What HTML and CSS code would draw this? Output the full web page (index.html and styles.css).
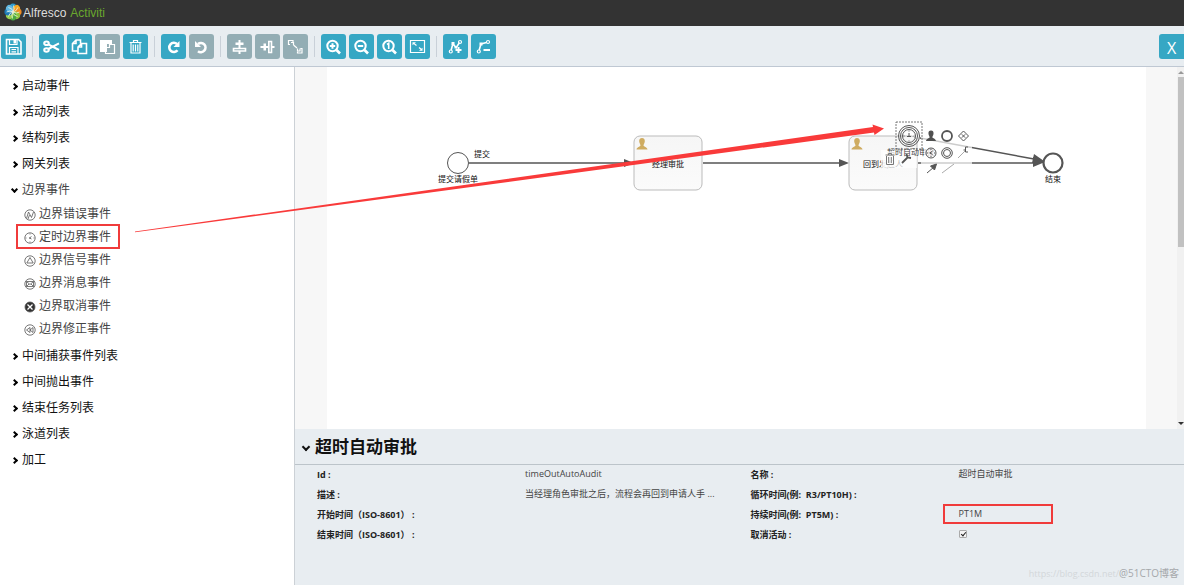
FILE: index.html
```html
<!DOCTYPE html>
<html lang="zh-CN">
<head>
<meta charset="utf-8">
<title>Alfresco Activiti</title>
<link rel="stylesheet" href="styles.css">
</head>
<body>
<header class="brand">
  <svg class="brand-mark" viewBox="0 0 18 18" aria-hidden="true">
    <ellipse cx="9" cy="4.400" rx="3.400" ry="4" fill="#2e9bd0"/>
    <ellipse cx="9" cy="4.400" rx="3.400" ry="4" fill="#f5a623" transform="rotate(45 9 9)"/>
    <ellipse cx="9" cy="4.400" rx="3.400" ry="4" fill="#f18b21" transform="rotate(90 9 9)"/>
    <ellipse cx="9" cy="4.400" rx="3.400" ry="4" fill="#8dc63f" transform="rotate(135 9 9)"/>
    <ellipse cx="9" cy="4.400" rx="3.400" ry="4" fill="#49a942" transform="rotate(180 9 9)"/>
    <ellipse cx="9" cy="4.400" rx="3.400" ry="4" fill="#9ad04f" transform="rotate(225 9 9)"/>
    <ellipse cx="9" cy="4.400" rx="3.400" ry="4" fill="#1c78b5" transform="rotate(270 9 9)"/>
    <ellipse cx="9" cy="4.400" rx="3.400" ry="4" fill="#63b9e3" transform="rotate(315 9 9)"/>
    <path d="M9 9Q11 6 9.500 2.500M9 9Q13 8 13.800 4.500M9 9Q12.500 11 15.500 9M9 9Q9.500 13 13.500 13.500M9 9Q7 12 8.500 15.500M9 9Q5 10 4.500 13.500M9 9Q6 7 2.500 9M9 9Q8.500 5 4.500 4.500" fill="none" stroke="#f3f8e4" stroke-width=".8"/>
  </svg>
  <span class="brand-name">Alfresco</span><span class="brand-product">Activiti</span>
</header>

<nav class="toolbar" aria-label="工具栏">
  <button class="tool" aria-label="保存"><svg viewBox="0 0 25 25"><path class="mid" d="M5.500 5.500h12l2.500 2.500v12H5.500z"/><path d="M8.500 5.500v5h7.500v-5M8.500 20v-6.500h8.500v6.500M10.500 15.500h4.500M10.500 17.800h4.500"/><path class="solid" d="M12.500 6h2.500v3.500h-2.500z"/></svg></button>
  <span class="divider"></span>
  <button class="tool" aria-label="剪切"><svg viewBox="0 0 25 25"><ellipse class="bold" cx="7.500" cy="9.300" rx="2.300" ry="1.800"/><ellipse class="bold" cx="7.500" cy="16" rx="2.300" ry="1.800"/><path class="bold" d="M9.300 10.300l10.700 5.700M9.300 15L20 9.300"/></svg></button>
  <button class="tool" aria-label="复制"><svg viewBox="0 0 25 25"><path class="mid" d="M13.500 9.500V6H9L5.500 9.500V17H11M9 6v3.500H5.500M14.500 9.500h5v10H11V13zM14.500 9.500V13H11"/></svg></button>
  <button class="tool muted" aria-label="粘贴"><svg viewBox="0 0 25 25"><path class="solid" d="M5 6h12v4h-5v8H5z"/><path d="M14.500 10.500h5v9h-9v-6h4z"/></svg></button>
  <button class="tool" aria-label="删除"><svg viewBox="0 0 25 25"><path d="M6.500 8.500h12M10.500 8V6.500h4V8M8 9v10h9V9M10.200 10.500v7M12.500 10.500v7M14.800 10.500v7"/></svg></button>
  <span class="divider"></span>
  <button class="tool" aria-label="重做"><svg viewBox="0 0 25 25"><path class="heavy" d="M16 10a4.600 4.600 0 1 0 .5 6.300"/><path class="solid" d="M18.500 7v6h-6z"/></svg></button>
  <button class="tool muted" aria-label="撤销"><svg viewBox="0 0 25 25"><path class="heavy" d="M9 10a4.600 4.600 0 1 1 0 7.200"/><path class="solid" d="M6 7v6h6z"/></svg></button>
  <span class="divider"></span>
  <button class="tool muted" aria-label="垂直对齐"><svg viewBox="0 0 25 25"><path class="solid" d="M11.500 6h2v14h-2zM8.500 8.500h8v2.500h-8z"/><path class="mid mutedfill" d="M6.500 14.500h12v2.500h-12z"/></svg></button>
  <button class="tool muted" aria-label="水平对齐"><svg viewBox="0 0 25 25"><path class="solid" d="M5.500 12h14v2h-14zM8.500 9.500h2.500v7H8.500z"/><path class="mid mutedfill" d="M13.800 7.500h2.700v11h-2.700z"/></svg></button>
  <button class="tool muted" aria-label="相同大小"><svg viewBox="0 0 25 25"><path d="M7 10.500H5.500V6.500h4.500v2M8 8.500h2.500v2.500M10.500 11l3.500 3M14.500 17.500v1.500h4.500v-4.500H17.500M14.500 17v-2.500M14.500 17h2.500V14.500"/></svg></button>
  <span class="divider"></span>
  <button class="tool" aria-label="放大"><svg viewBox="0 0 25 25"><circle class="bold" cx="11.500" cy="12" r="5.200"/><path class="heavy" d="M15.500 16l3.500 3.500"/><path class="bold" d="M11.500 9.300v5.400M8.800 12h5.400"/></svg></button>
  <button class="tool" aria-label="缩小"><svg viewBox="0 0 25 25"><circle class="bold" cx="11.500" cy="12" r="5.200"/><path class="heavy" d="M15.500 16l3.500 3.500"/><path class="bold" d="M8.800 12h5.400"/></svg></button>
  <button class="tool" aria-label="实际大小"><svg viewBox="0 0 25 25"><circle class="bold" cx="11.500" cy="12" r="5.200"/><path class="heavy" d="M15.500 16l3.500 3.500"/><path class="mid" d="M10 10.500l1.700-1.200V15"/></svg></button>
  <button class="tool" aria-label="适应窗口"><svg viewBox="0 0 25 25"><path d="M5.500 6.500h14v12h-14zM9 9.500l2.500 2M14 13.500l2.500 2"/><path class="solid" d="M7.500 8.300h3.500l-3.500 3zM17.500 16.700h-3.500l3.500-3z"/></svg></button>
  <span class="divider"></span>
  <button class="tool" aria-label="添加拐点"><svg viewBox="0 0 25 25"><circle cx="7.800" cy="17.500" r="1.500"/><path class="mid" d="M8.200 16l1.600-6 3.500 3.500 3.200-5"/><path class="solid" d="M8.500 8h3v3h-3zM11.500 12h2.500v2.500h-2.500z"/><circle cx="17" cy="8" r="1.500"/><path class="bold" d="M15.500 13v6M12.500 16h6"/></svg></button>
  <button class="tool" aria-label="移除拐点"><svg viewBox="0 0 25 25"><circle cx="7.800" cy="17.500" r="1.500"/><path class="mid" d="M8.200 16l1.800-6 5.500-1.500"/><path class="solid" d="M8.500 8.500h3v3h-3z"/><circle cx="17" cy="8" r="1.500"/><path class="bold" d="M12.500 16H19"/></svg></button>
  <button class="tool close" aria-label="关闭">X</button>
</nav>

<div class="workspace">
  <aside class="palette">
    <button class="group">启动事件</button>
    <button class="group">活动列表</button>
    <button class="group">结构列表</button>
    <button class="group">网关列表</button>
    <button class="group open" aria-expanded="true">边界事件</button>
    <ul class="items">
      <li><svg viewBox="0 0 12 12"><circle cx="6" cy="6" r="5.200"/><path d="M2.500 9.500l2-6.500 3 5.500 2-5.500M4 10l1.500-4"/></svg>边界错误事件</li>
      <li class="marked"><svg viewBox="0 0 12 12"><circle cx="6" cy="6" r="5.200"/><path d="M7.500 4.500L5.500 6l2 1M5 6h1.500M6 1.500v1M6 9.500v1M1.500 6h1M9.500 6h1"/></svg>定时边界事件</li>
      <li><svg viewBox="0 0 12 12"><circle cx="6" cy="6" r="5.200"/><path d="M6 2.500l3.200 5.500H2.800z"/></svg>边界信号事件</li>
      <li><svg viewBox="0 0 12 12"><circle cx="6" cy="6" r="5.200"/><path d="M2.500 3.500h7v5h-7zl3.500 3 3.500-3M2.500 8.500l2.500-2.500M9.500 8.500L7 6"/></svg>边界消息事件</li>
      <li><svg viewBox="0 0 12 12"><circle class="dark" cx="6" cy="6" r="5"/><path class="light" d="M3.500 3.500l5 5M8.500 3.500l-5 5"/></svg>边界取消事件</li>
      <li><svg viewBox="0 0 12 12"><circle cx="6" cy="6" r="5.200"/><path d="M6 3.500L2.500 6 6 8.500zM9 3.500L6 6l3 2.500z"/></svg>边界修正事件</li>
    </ul>
    <button class="group">中间捕获事件列表</button>
    <button class="group">中间抛出事件</button>
    <button class="group">结束任务列表</button>
    <button class="group">泳道列表</button>
    <button class="group">加工</button>
  </aside>

  <main class="editor">
    <section class="canvas">
      <div class="paper">
        <svg class="diagram" viewBox="327 67 819 362" role="img" aria-label="流程图">
          <defs>
            <linearGradient id="task" x2="0" y2="1"><stop offset="0" stop-color="#f6f6f6"/><stop offset="1" stop-color="#fbfbfb"/></linearGradient>
            <g id="person"><path d="M0-6c2 0 3 1.400 2.800 3.400C2.600-.7 1.500.3 1.500 1.500 2 3 5 2.700 5.500 5.500h-11C-5 2.700-2 3-1.500 1.500-1.500.3-2.600-.7-2.800-2.600-3-4.600-2-6 0-6z"/></g>
          </defs>
          <g class="flow"><path d="M469 163H626M703 163H841M918 163H1034M920 138L1034 159"/></g>
          <path class="head" d="M624 159l10 4-10 4zM839 159l10 4-10 4zM1033 157l12 5-12 5zM1034 154l10 7-12 2z"/>
          <circle class="event" cx="458" cy="163" r="10.500"/>
          <circle class="event end" cx="1053" cy="163" r="9.500"/>
          <rect class="task" x="634" y="136" width="68" height="54" rx="6"/>
          <rect class="task" x="849" y="136" width="68" height="54" rx="6"/>
          <use href="#person" x="642" y="144" fill="#cfac61"/>
          <use href="#person" x="857" y="144" fill="#cfac61"/>
          <g class="label">
            <text x="474" y="157">提交</text>
            <text x="458" y="182" text-anchor="middle">提交请假单</text>
            <text x="668" y="167" text-anchor="middle">经理审批</text>
            <text x="883" y="167" text-anchor="middle">回到发起人</text>
            <text x="1053" y="182" text-anchor="middle">结束</text>
          </g>
          <path class="veil" d="M881 150h36v18h-36zM921 128h51v48h-51z"/>
          <g class="label"><text class="soft" x="911" y="155" text-anchor="middle">超时自动审批</text></g>
          <path class="veil" d="M883 152h12v15h-12zM924 146h14v14h-14z"/>
          <rect class="selection" x="896" y="122" width="26" height="27"/>
          <g class="timer"><circle cx="909" cy="136" r="10.500"/><circle cx="909" cy="136" r="8.500"/><circle cx="909" cy="136" r="6.500"/><path d="M909 133v4M907 136.500h4M909 130.500v1M909 140.500v1M903.500 136h1M913.500 136h1"/></g>
          <use href="#person" fill="#505050" transform="translate(931 136) scale(.9)"/>
          <g class="context">
            <circle class="thick" cx="947" cy="136" r="5"/>
            <path d="M963.500 131l5 5-5 5-5-5zM961.800 134.300l3.400 3.400M965.200 134.300l-3.400 3.400"/>
            <circle cx="931" cy="153" r="5"/><path d="M932.500 151l-2.500 2 2.500 1.500M929.500 153h2M931 149v1M931 156v1M927 153h1M934 153h1"/>
            <circle cx="947" cy="153" r="5.300"/><circle cx="947" cy="153" r="3.500"/>
            <path class="faint" d="M958 158l8-8M942 173l12-9"/><path d="M968 147h-2.500v5h2.500M963.500 150h2"/>
            <path class="bin" d="M885.500 155h9M888.500 155v-1.500h3v1.500M886.500 156v8.500h7v-8.500M888.700 157v6M891.300 157v6"/>
            <path class="thick" d="M902 163l6-6M906.500 154l1 3.500 3.500 .5"/>
            <path d="M927 173l7-6"/><path class="head" d="M936.500 164l-2 6-4-4z"/>
          </g>
        </svg>
      </div>
      <div class="scrollbar" aria-hidden="true"><i class="up"></i><i class="thumb"></i><i class="down"></i></div>
    </section>

    <section class="properties">
      <h1 class="title">超时自动审批</h1>
      <div class="fields">
        <b>Id :</b><span>timeOutAutoAudit</span>
        <b>名称 :</b><span>超时自动审批</span>
        <b>描述 :</b><span>当经理角色审批之后，流程会再回到申请人手 ...</span>
        <b>循环时间(例:&nbsp; R3/PT10H) :</b><span></span>
        <b>开始时间（ISO-8601） :</b><span></span>
        <b>持续时间(例:&nbsp; PT5M) :</b><span class="duration">PT1M</span>
        <b>结束时间（ISO-8601） :</b><span></span>
        <label for="cancel">取消活动 :</label><span><input class="check" type="checkbox" id="cancel" checked></span>
      </div>
      <p class="credit"><span>https://blog.csdn.net/</span>@51CTO博客</p>
    </section>
  </main>

  <svg class="pointer" viewBox="0 67 900 180" aria-hidden="true"><path d="M135 231.500L873 127 872.500 124.500 884 128.500 874.500 135 874 132.500 135 232.300z"/></svg>
</div>
</body>
</html>
```
FILE: styles.css
```css
*, ::before, ::after { box-sizing: border-box; }

body {
  margin: 0;
  min-height: 100vh;
  display: flex;
  flex-direction: column;
  background: #fff;
  color: #222;
  font-family: "Open Sans", "Noto Sans CJK SC", sans-serif;
  font-size: 9px;
}

button { font-family: inherit; border: 0; padding: 0; cursor: pointer; }

.brand {
  display: flex;
  align-items: center;
  height: 26px;
  padding: 0 4px;
  background: #333;
  font: 12px/24px "Liberation Sans", Arial, sans-serif;
}
.brand-mark { width: 18px; height: 18px; margin: 0 1px 2px 0; }
.brand-name { color: #ddd; margin-right: 4px; }
.brand-product { color: #6aa82e; }

.toolbar {
  display: flex;
  align-items: center;
  gap: 3px;
  height: 41px;
  padding-left: 1px;
  background: #e8edf1;
  border-bottom: 1px solid #bfc8d3;
}
.tool {
  width: 25px;
  height: 25px;
  flex: none;
  border-radius: 3px;
  background: #36a7c4;
  color: #fff;
}
.tool svg {
  display: block;
  fill: none;
  stroke: #fff;
  stroke-width: 1.2;
}
.tool .solid { fill: #fff; stroke: none; }
.tool .mid { stroke-width: 1.6; }
.tool .bold { stroke-width: 2; }
.tool .heavy { stroke-width: 2.6; }
.tool.muted { background: #93adb4; }
.tool .mutedfill { fill: #93adb4; }
.divider { width: 1px; height: 21px; margin: 0 3px; background: #c9d0d8; }
.close { margin-left: auto; border-radius: 3px 0 0 3px; font-size: 16px; line-height: 28px; }

.workspace { position: relative; flex: 1; display: flex; }

.palette {
  flex: 0 0 295px;
  padding: 5px 0 5px 12px;
  border-right: 1px solid #ccd1d6;
}
.group {
  display: flex;
  align-items: center;
  height: 26px;
  background: none;
  color: #111;
  font-size: 12px;
}
.group::before {
  content: "";
  width: 5px;
  height: 5px;
  margin: 2px 5px 0 0;
  border: solid #000;
  border-width: 2px 2px 0 0;
  transform: rotate(45deg);
}
.group.open { color: #444; }
.group.open::before { transform: rotate(135deg); margin-top: 0; }
.items { list-style: none; margin: 0 0 2px; padding: 0; }
.items li {
  display: flex;
  align-items: center;
  gap: 3px;
  width: 102px;
  height: 23px;
  margin-left: 5px;
  padding-left: 7px;
  color: #444;
  font-size: 12px;
  line-height: 20px;
  white-space: nowrap;
}
.items .marked { outline: 2px solid #f03b3b; outline-offset: -1px; }
.items svg { width: 12px; height: 12px; flex: none; margin-top: 2px; fill: none; stroke: #555; stroke-width: .8; }
.items .dark { fill: #333; }
.items .light { stroke: #fff; stroke-width: 1.3; }

.editor { flex: 1; min-width: 0; display: flex; flex-direction: column; }
.canvas { flex: 1; display: flex; background: #f7f7f7; }
.paper { flex: 1; min-width: 0; margin: 0 31px 0 32px; background: #fff; overflow: hidden; }
.diagram { display: block; width: 819px; height: 362px; }
.flow { fill: none; stroke: #555; stroke-width: 1.4; }
.head { fill: #555; }
.event { fill: #fff; stroke: #555; stroke-width: 1; }
.end { stroke-width: 2.2; }
.task { fill: url(#task); stroke: #bbb; }
.label { font-size: 8px; fill: #111; }
.soft { fill: #444; }
.veil { fill: #fff; opacity: .7; }
.selection { fill: none; stroke: #555; stroke-width: .8; stroke-dasharray: 2 1; }
.timer, .context { fill: none; stroke: #555; stroke-width: 1; }
.context .thick { stroke-width: 1.8; }
.context .faint { stroke: #aaa; }
.context .bin { stroke: #777; }

.scrollbar {
  display: flex;
  flex-direction: column;
  align-items: center;
  width: 7px;
  padding: 4px 0;
  background: #f1f1f1;
}
.scrollbar .up, .scrollbar .down { border: 3px solid transparent; }
.scrollbar .up { border-top: 0; border-bottom-color: #999; }
.scrollbar .down { border-bottom: 0; border-top-color: #333; margin-top: auto; }
.thumb { width: 6px; height: 48%; margin-top: 3px; background: #c1c1c1; }

.properties { position: relative; padding-bottom: 40px; background: #e8edf1; }
.title {
  display: flex;
  align-items: center;
  height: 36px;
  margin: 0;
  padding-left: 8px;
  border-bottom: 1px solid #bcc4ca;
  color: #111;
  font-size: 17px;
  line-height: 34px;
}
.title::before {
  content: "";
  width: 6px;
  height: 6px;
  margin-right: 6px;
  border: solid #111;
  border-width: 0 2px 2px 0;
  transform: rotate(45deg);
}
.fields {
  display: grid;
  grid-template-columns: 12fr 13fr 12fr 13fr;
  grid-auto-rows: 20px;
  padding-left: 22px;
  line-height: 20px;
  white-space: nowrap;
}
.fields b, .fields label { font-weight: 700; }
.fields span { color: #444; line-height: 18px; }
.fields .duration { position: relative; }
.duration::after {
  content: "";
  position: absolute;
  left: -16px;
  top: -1px;
  width: 110px;
  height: 20px;
  border: 2px solid #f03b3b;
}
.check { width: 8px; height: 8px; margin: 5px 0 0; appearance: none; border: 1px solid #aaa; border-radius: 1px; background: #f4f4f4; display: block; position: relative; }
.check:checked::after {
  content: "";
  position: absolute;
  left: 2px;
  top: 0;
  width: 3px;
  height: 5px;
  border: solid #222;
  border-width: 0 1px 1px 0;
  transform: rotate(40deg);
}
.credit { position: absolute; right: 5px; bottom: 3px; margin: 0; color: #a5a8ab; font-size: 10px; line-height: 16px; }
.credit span { color: #d3d7da; font-size: 9px; }

.pointer { position: absolute; left: 0; top: 0; width: 900px; height: 180px; fill: #f93a3a; pointer-events: none; }
```
